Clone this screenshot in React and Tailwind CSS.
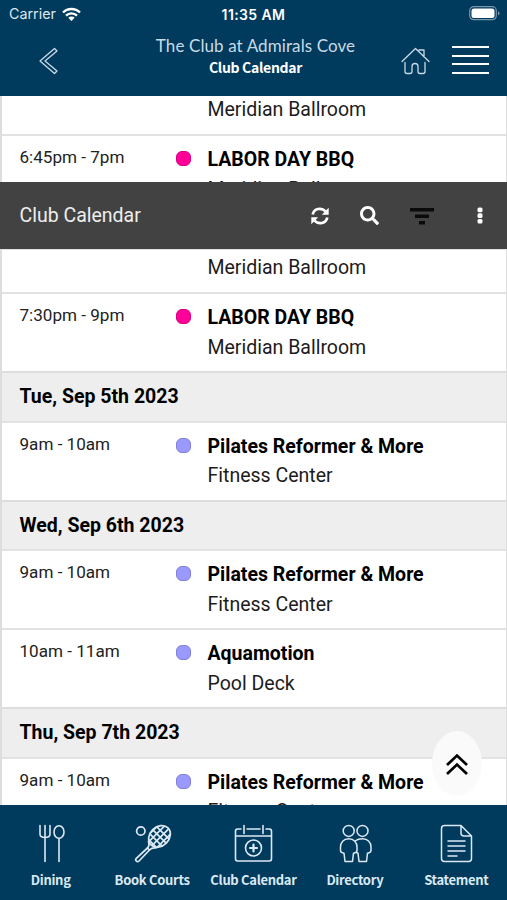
import React from 'react';
import { FaSearch } from 'react-icons/fa';

const PINK = 'bg-[#ff0099] border-[#d60084]';
const PURPLE = 'bg-[#9999ff] border-[#8080d6]';

const schedule = [
  { type: 'event', time: '7:30pm - 9pm', title: 'LABOR DAY BBQ', place: 'Meridian Ballroom', color: PINK },
  { type: 'day', label: 'Tue, Sep 5th 2023' },
  { type: 'event', time: '9am - 10am', title: 'Pilates Reformer & More', place: 'Fitness Center', color: PURPLE },
  { type: 'day', label: 'Wed, Sep 6th 2023' },
  { type: 'event', time: '9am - 10am', title: 'Pilates Reformer & More', place: 'Fitness Center', color: PURPLE },
  { type: 'event', time: '10am - 11am', title: 'Aquamotion', place: 'Pool Deck', color: PURPLE },
  { type: 'day', label: 'Thu, Sep 7th 2023' },
  { type: 'event', time: '9am - 10am', title: 'Pilates Reformer & More', place: 'Fitness Center', color: PURPLE },
];

function EventRow({ event }) {
  return (
    <div className="flex h-[79px] shrink-0 border-t-2 border-[#e2e2e2] pl-[17.5px]">
      <div className="w-[156px] pt-[9px] text-[17.1px] leading-6 text-[#222]">{event.time}</div>
      <div className={`mt-[15px] h-[15px] w-[15px] rounded-[6px] border ${event.color}`}></div>
      <div className="ml-[17px] pt-[9px] text-[19.5px] leading-[29.5px]">
        <p className="font-bold text-black">{event.title}</p>
        <p className="text-[#1c1c1c]">{event.place}</p>
      </div>
    </div>
  );
}

function DayRow({ label }) {
  return (
    <div className="h-[49.6px] shrink-0 border-t-2 border-[#dddddd] bg-[#eeeeee] pl-[17.5px] text-[19.5px] font-bold leading-[47px] text-black">
      {label}
    </div>
  );
}

function DiningIcon() {
  return (
    <svg width="40" height="40" viewBox="0 0 40 40" fill="none" stroke="currentColor" strokeWidth="1.6" strokeLinecap="round">
      <path d="M9 1.500v8.500c0 2.500 2 3.500 5 3.500s5-1 5-3.500V1.500M14 1.500v36" />
      <path d="M28 14.500v23" />
      <ellipse cx="28" cy="8" rx="5" ry="6.300" />
    </svg>
  );
}

function CourtsIcon() {
  return (
    <svg width="40" height="40" viewBox="0 0 40 40" fill="none" stroke="currentColor" strokeWidth="1.700" strokeLinecap="round" strokeLinejoin="round">
      <circle cx="8.800" cy="7" r="4.200" />
      <defs>
        <clipPath id="racket">
          <ellipse cx="27.500" cy="12.400" rx="12" ry="9.600" transform="rotate(-45 27.500 12.400)" />
        </clipPath>
      </defs>
      <ellipse cx="27.500" cy="12.400" rx="12" ry="9.600" transform="rotate(-45 27.500 12.400)" />
      <g clipPath="url(#racket)" strokeWidth="1.700">
        <path d="M10 10.500 30-9.500M10 17.500 37-9.500M10 24.500 44-9.500M10 31.500 44-2.500M17 31.500 44 4.500" />
        <path d="M10-12 45 23M10-5 45 30M10 2 45 37M10 9 38 37" />
      </g>
      <path d="M16.500 17.500Q18 21 15.500 24L4.300 34.300a1.900 1.900 0 0 0 2.700 2.700L17.500 26Q20 23.500 24 24" />
      <path d="M15.500 24 17.500 26" />
    </svg>
  );
}

function CalendarIcon() {
  return (
    <svg width="40" height="40" viewBox="0 0 40 40" fill="none" stroke="currentColor" strokeWidth="1.600" strokeLinecap="round">
      <path d="M8 5H4.500Q2.500 5 2.500 7.500v27Q2.500 37 4.500 37h32q2 0 2-2.500v-27Q38.500 5 36.500 5H33M14 5h13M2.500 12h36M11 1.500v8M30 1.500v8" />
      <circle cx="20.500" cy="24" r="8" />
      <path d="M20.500 20.500v7M17 24h7" strokeWidth="2.200" />
    </svg>
  );
}

function DirectoryIcon() {
  return (
    <svg width="40" height="40" viewBox="0 0 40 40" fill="none" stroke="currentColor" strokeWidth="1.500" strokeLinejoin="round">
      <circle cx="13.700" cy="6.900" r="5.500" />
      <circle cx="27.500" cy="6.900" r="5.500" />
      <path d="M13.700 14.800C8.500 14.800 5.500 18.500 5.500 23v3.500q0 2 3.500 2.700L10 37.500h7.500L18.500 29.200Q22 28.500 22 26.500V23C22 18.500 19 14.800 13.700 14.800Z" />
      <path d="M20 17q3-2.200 7.500-2.200C33 14.800 36 18.500 36 23v3.500q0 2-3.500 2.700L31.500 37.500H24L23 29.200L21 28.300" />
    </svg>
  );
}

function StatementIcon() {
  return (
    <svg width="40" height="40" viewBox="0 0 40 40" fill="none" stroke="currentColor" strokeWidth="1.500" strokeLinecap="round" strokeLinejoin="round">
      <path d="M8.500 1.500h16.500L35.500 12v22.500q0 3-3 3h-24q-3 0-3-3v-30q0-3 3-3ZM25 1.500V9q0 3 3 3H35.500" />
      <path d="M12 17h17M12 22h17M12 27h17M12 32h9" />
    </svg>
  );
}

const tabs = [
  { label: 'Dining', Icon: DiningIcon },
  { label: 'Book Courts', Icon: CourtsIcon },
  { label: 'Club Calendar', Icon: CalendarIcon },
  { label: 'Directory', Icon: DirectoryIcon },
  { label: 'Statement', Icon: StatementIcon },
];

export default function App() {
  return (
    <div className="relative flex h-[900px] w-[507px] flex-col overflow-hidden bg-white font-['Roboto',sans-serif]">
      {/* Status bar + header */}
      <header className="h-24 shrink-0 bg-[#003a5d] text-white">
        <div className="grid h-7 grid-cols-3 items-center pl-[7px] pr-[7px] font-['Inter',sans-serif]">
          <div className="flex items-center gap-[6px] pl-[2px] text-[14.3px] text-[#dbe6ee]">
            Carrier
            <svg width="19" height="15" viewBox="0 0 19 15" fill="none" stroke="white" strokeWidth="2.400">
              <path d="M1 5.500a12 12 0 0 1 17 0M4 8.700a7.700 7.700 0 0 1 11 0" />
              <path d="M9.500 14 6.300 10.800a4.500 4.500 0 0 1 6.400 0Z" fill="white" stroke="none" />
            </svg>
          </div>
          <div className="text-center text-[14px] font-semibold tracking-[0.4px]">11:35 AM</div>
          <svg className="-mt-[2px] justify-self-end" width="31" height="15" viewBox="0 0 31 15" fill="none">
            <rect x="0.700" y="0.700" width="26.600" height="13" rx="4" stroke="#7997ab" strokeWidth="1.200" />
            <rect x="2.500" y="2.500" width="23" height="9.500" rx="2.500" fill="white" />
            <path d="M29 5v4.500q1.500-.7 1.500-2.250T29 5" fill="#7997ab" />
          </svg>
        </div>
        <div className="flex h-[68px]">
          <div className="w-[126px] pl-[38px] pt-[18px]">
            <svg width="22" height="30" viewBox="0 0 22 30" fill="none" stroke="#c9dae6" strokeWidth="1.300" strokeLinejoin="round">
              <path d="M2 15 16.500 2.500 19 5 7 15 19 25 16.500 27.500Z" />
            </svg>
          </div>
          <div className="w-[259px] pt-[7px] text-center">
            <p className="whitespace-nowrap font-['Lato',sans-serif] text-[17px] leading-[21px] tracking-[0.1px] text-[#c9dae6]">The Club at Admirals Cove</p>
            <p className="font-['Noto_Sans_CJK_SC',sans-serif] text-[14px] font-bold leading-[22px] tracking-[-0.3px]">Club Calendar</p>
          </div>
          <div className="flex flex-1 justify-between pl-[15px] pr-[18px] pt-[17px]">
            <svg width="30" height="32" viewBox="0 0 30 32" fill="none" stroke="#c9dae6" strokeWidth="1.300" strokeLinecap="round" strokeLinejoin="round">
              <path d="M2 16.500 15.500 3.500 29 16.500M19 5h5v7" />
              <path d="M5 17.500v9q0 2 2 2h3q2 0 2-2v-5q0-3 3-3t3 3v5q0 2 2 2h3q2 0 2-2v-9" />
            </svg>
            <div className="mt-[1px] flex h-[28px] w-[37px] flex-col justify-between">
              <span className="h-[2px] bg-white"></span>
              <span className="h-[2px] bg-white"></span>
              <span className="h-[2px] bg-white"></span>
              <span className="h-[2px] bg-white"></span>
            </div>
          </div>
        </div>
      </header>

      {/* Rows scrolled behind the toolbar */}
      <div className="h-[86px] shrink-0 overflow-hidden border-l-2 border-r border-[#dddddd]">
        <p className="h-[38px] pl-[205.5px] text-[19.5px] leading-7 text-[#1c1c1c]">Meridian Ballroom</p>
        <EventRow event={{ time: '6:45pm - 7pm', title: 'LABOR DAY BBQ', place: 'Meridian Ballroom', color: PINK }} />
      </div>

      {/* Toolbar */}
      <div className="flex h-[67px] shrink-0 items-center bg-[#424242] pl-[19.5px] text-white">
        <h1 className="w-[291px] shrink-0 text-[19.5px] text-[#eeeeee]">Club Calendar</h1>
        <svg className="shrink-0" width="18" height="18" viewBox="0 0 18 18" fill="none" stroke="white" strokeWidth="2.700">
          <path d="M1.700 7.500C2.800 1.500 10.500 0 14.500 4.300M16.300 10.500C15.200 16.500 7.500 18 3.500 13.700" />
          <path d="M17.700.8v6.900h-6.900ZM.3 17.200v-6.900h6.900Z" fill="white" stroke="none" />
        </svg>
        <FaSearch className="ml-[31px] h-[19px] w-[19px] shrink-0" />
        <svg className="ml-[31px] shrink-0" width="24" height="18" viewBox="0 0 24 18" fill="#0a0a0a">
          <path d="M0 1h24v3.500H0zM5 7.500h14V11H5zM9 14h6v3.500H9z" />
        </svg>
        <svg className="ml-[43px] shrink-0" width="6" height="18" viewBox="0 0 6 18" fill="white">
          <rect x="0.500" y="0.500" width="5" height="4.700" rx="1.500" />
          <rect x="0.500" y="6.200" width="5" height="4.700" rx="1.500" />
          <rect x="0.500" y="11.900" width="5" height="4.700" rx="1.500" />
        </svg>
      </div>

      {/* Event list */}
      <main className="flex min-h-0 flex-1 flex-col overflow-hidden border-l-2 border-r border-[#dddddd]">
        <p className="h-[43px] shrink-0 border-t border-[#e2e2e2] pl-[205.5px] text-[19.5px] leading-9 text-[#1c1c1c]">Meridian Ballroom</p>
        {schedule.map((item, index) =>
          item.type === 'day' ? <DayRow key={index} label={item.label} /> : <EventRow key={index} event={item} />
        )}
      </main>

      {/* Scroll to top */}
      <button className="absolute left-[432px] top-[731px] flex h-[65px] w-[50px] items-center justify-center rounded-[50%] bg-[#fafafa] text-black">
        <svg width="24" height="24" viewBox="0 0 24 24" fill="none" stroke="currentColor" strokeWidth="2.700">
          <path d="M2 13 12 3.500 22 13M2 22 12 12.500 22 22" />
        </svg>
      </button>

      {/* Bottom tabs */}
      <nav className="grid h-[95px] shrink-0 grid-cols-5 bg-[#003a5d] text-[#dbe9f3]">
        {tabs.map(({ label, Icon }) => (
          <div key={label} className="flex flex-col items-center pt-[19px]">
            <Icon />
            <span className="mt-[6px] whitespace-nowrap font-['Noto_Sans_CJK_SC',sans-serif] text-[13px] font-bold leading-5 tracking-[-0.3px]">{label}</span>
          </div>
        ))}
      </nav>
    </div>
  );
}
